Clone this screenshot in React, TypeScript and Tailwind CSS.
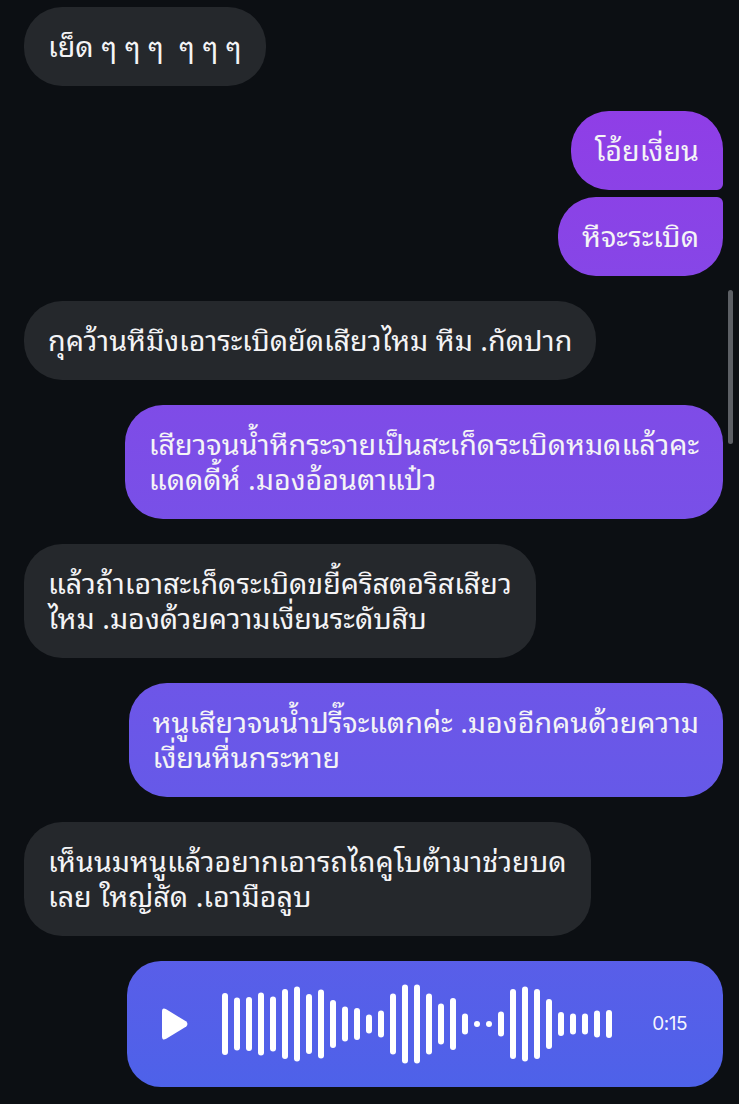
import { Fragment } from "react";

type Msg = {
  id: number;
  me: boolean;
  lines: string[];
  grouped?: boolean;
  corner?: string;
};

const messages: Msg[] = [
  { id: 1, me: false, lines: ["เย็ด ๆ ๆ ๆ  ๆ ๆ ๆ"] },
  { id: 2, me: true, lines: ["โอ้ยเงี่ยน"], corner: "rounded-br-[6px]" },
  { id: 3, me: true, lines: ["หีจะระเบิด"], grouped: true, corner: "rounded-tr-[6px]" },
  { id: 4, me: false, lines: ["กุคว้านหีมึงเอาระเบิดยัดเสียวไหม หีม .กัดปาก"] },
  { id: 5, me: true, lines: ["เสียวจนน้ำหีกระจายเป็นสะเก็ดระเบิดหมดแล้วคะ", "แดดดี้ห์ .มองอ้อนตาแป๋ว"] },
  { id: 6, me: false, lines: ["แล้วถ้าเอาสะเก็ดระเบิดขยี้คริสตอริสเสียว", "ไหม .มองด้วยความเงี่ยนระดับสิบ"] },
  { id: 7, me: true, lines: ["หนูเสียวจนน้ำปรี๊จะแตกค่ะ .มองอีกคนด้วยความ", "เงี่ยนหื่นกระหาย"] },
  { id: 8, me: false, lines: ["เห็นนมหนูแล้วอยากเอารถไถคูโบต้ามาช่วยบด", "เลย ใหญ่สัด .เอามือลูบ"] },
];

const wave = [62, 53, 54, 63, 55, 70, 75, 60, 69, 48, 35, 32, 19, 27, 61, 79, 79, 61, 41, 52, 21, 6, 6, 25, 70, 75, 70, 50, 24, 21, 21, 27, 28];

const thai = "font-['Noto_Sans_Thai_Looped','Loma','Garuda','Noto_Sans_Thai','Noto_Sans',sans-serif]";
const sent = "bg-fixed bg-linear-to-b from-[#9538e6] to-[#4c62e9]";

const Bubble = ({ m }: { m: Msg }) => (
  <div className={`flex ${m.me ? "justify-end" : "justify-start"} ${m.grouped ? "mt-[7px]" : "mt-[25px] first:mt-0"}`}>
    <div
      className={`rounded-[38px] px-6 pt-[20px] pb-[24px] text-[28.7px] leading-[35px] text-[#f4f4f6] whitespace-pre ${thai} ${
        m.me ? sent : "bg-[#25282c]"
      } ${m.corner ?? ""}`}
    >
      {m.lines.map((l, i) => (
        <Fragment key={i}>
          {i > 0 && <br />}
          {l}
        </Fragment>
      ))}
    </div>
  </div>
);

const Voice = () => (
  <div className="flex justify-end mt-[25px]">
    <div className={`w-[596px] h-[126px] rounded-[34px] flex items-center pl-[35px] pr-[36px] ${sent}`}>
      <svg width="26" height="32" viewBox="0 0 26 32" className="shrink-0">
        <path d="M4.2 1.2 L24.3 13.6 Q26.6 16 24.3 18.4 L4.2 30.8 Q0 33 0 28.4 L0 3.6 Q0 -1 4.2 1.2 Z" fill="#ffffff" />
      </svg>
      <svg width="390" height="84" viewBox="0 0 390 84" className="ml-[34px] shrink-0">
        {wave.map((h, i) => (
          <rect key={i} x={i * 12} y={42 - h / 2} width="6" height={h} rx="3" fill="#ffffff" />
        ))}
      </svg>
      <span className="ml-auto text-[19px] text-white/95 font-['Inter','Liberation_Sans',sans-serif] tracking-tight">0:15</span>
    </div>
  </div>
);

export default function App() {
  return (
    <div className="relative min-h-screen w-full bg-[#0c0f13] overflow-hidden">
      <div className="flex flex-col pt-[7px] pl-6 pr-4 pb-4">
        {messages.map((m) => (
          <Bubble key={m.id} m={m} />
        ))}
        <Voice />
      </div>

      {/* scroll indicator */}
      <div className="absolute right-[6px] top-[290px] w-[5px] h-[154px] rounded-full bg-[#5d6065]" />
    </div>
  );
}
